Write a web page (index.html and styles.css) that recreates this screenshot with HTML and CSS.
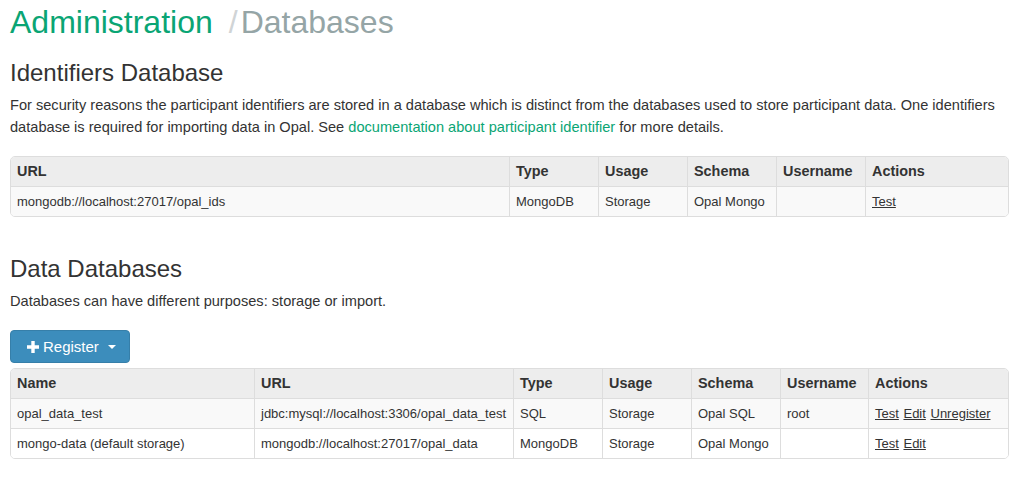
FILE: index.html
```html
<!DOCTYPE html>
<html>
<head>
<meta charset="utf-8">
<link rel="stylesheet" href="styles.css">
</head>
<body>
<div class="page">
  <h1 class="title"><span class="crumb">Administration</span><span class="sep">/</span><span class="current">Databases</span></h1>

  <h2 class="section-title">Identifiers Database</h2>
  <p class="help">For security reasons the participant identifiers are stored in a database which is distinct from the databases used to store participant data. One identifiers database is required for importing data in Opal. See <a class="doc-link" href="#">documentation about participant identifier</a> for more details.</p>

  <table class="grid grid-ids">
    <colgroup>
      <col class="c-url1"><col class="c-sm"><col class="c-sm"><col class="c-sm"><col class="c-sm"><col class="c-act1">
    </colgroup>
    <thead>
      <tr><th>URL</th><th>Type</th><th>Usage</th><th>Schema</th><th>Username</th><th>Actions</th></tr>
    </thead>
    <tbody>
      <tr><td>mongodb://localhost:27017/opal_ids</td><td>MongoDB</td><td>Storage</td><td>Opal Mongo</td><td></td><td><a class="act" href="#">Test</a></td></tr>
    </tbody>
  </table>

  <h2 class="section-title section-gap">Data Databases</h2>
  <p class="help">Databases can have different purposes: storage or import.</p>

  <div class="toolbar">
    <button class="btn-primary" type="button">
      <svg class="plus" width="12" height="12" viewBox="0 0 12 12"><path d="M4.3 0h3.4v4.3H12v3.4H7.7V12H4.3V7.7H0V4.3h4.3z" fill="#fff"/></svg>
      <span class="btn-label">Register</span>
      <span class="caret"></span>
    </button>
  </div>

  <table class="grid grid-data">
    <colgroup>
      <col class="c-name"><col class="c-url2"><col class="c-sm"><col class="c-sm"><col class="c-sm"><col class="c-user2"><col class="c-act2">
    </colgroup>
    <thead>
      <tr><th>Name</th><th>URL</th><th>Type</th><th>Usage</th><th>Schema</th><th>Username</th><th>Actions</th></tr>
    </thead>
    <tbody>
      <tr><td>opal_data_test</td><td>jdbc:mysql://localhost:3306/opal_data_test</td><td>SQL</td><td>Storage</td><td>Opal SQL</td><td>root</td><td><a class="act" href="#">Test</a> <a class="act" href="#">Edit</a> <a class="act" href="#">Unregister</a></td></tr>
      <tr><td>mongo-data (default storage)</td><td>mongodb://localhost:27017/opal_data</td><td>MongoDB</td><td>Storage</td><td>Opal Mongo</td><td></td><td><a class="act" href="#">Test</a> <a class="act" href="#">Edit</a></td></tr>
    </tbody>
  </table>
</div>
</body>
</html>
```

FILE: styles.css
```css
html, body {
  margin: 0;
  padding: 0;
  background: #fff;
}
body {
  font-family: "Liberation Sans", Arial, sans-serif;
  color: #333;
}
.page {
  padding: 0 19px 20px 10px;
}
.title {
  margin: 4px 0 0;
  font-size: 32px;
  line-height: 36px;
  font-weight: normal;
  white-space: nowrap;
}
.crumb {
  color: #0aa574;
}
.sep {
  color: #d0d4d6;
  margin-left: 16px;
  margin-right: 3px;
}
.current {
  color: #95a5a6;
}
.section-title {
  margin: 19px 0 7px;
  font-size: 24px;
  line-height: 28px;
  font-weight: normal;
  color: #333;
}
.section-gap {
  margin-top: 38px;
}
.help {
  margin: 0;
  font-size: 14.6px;
  line-height: 22px;
}
.doc-link {
  color: #0aa574;
  text-decoration: none;
}
.grid {
  width: 999px;
  table-layout: fixed;
  border-collapse: separate;
  border-spacing: 0;
  border: 1px solid #ddd;
  border-radius: 5px;
  overflow: hidden;
}
.grid-ids {
  margin-top: 18px;
}
.grid-data {
  margin-top: 5px;
}
.c-url1 { width: 498px; }
.c-sm { width: 89px; }
.c-act1 { width: 143px; }
.c-name { width: 243px; }
.c-url2 { width: 259px; }
.c-user2 { width: 88px; }
.c-act2 { width: 140px; }
.grid th,
.grid td {
  text-align: left;
  padding: 5px 6px;
  line-height: 19px;
  white-space: nowrap;
  overflow: hidden;
  border-left: 1px solid #ddd;
}
.grid th:first-child,
.grid td:first-child {
  border-left: none;
}
.grid th {
  background: #ededed;
  font-size: 14.4px;
  font-weight: bold;
  color: #333;
}
.grid td {
  font-size: 13px;
  border-top: 1px solid #ddd;
}
.grid tbody tr:nth-child(odd) td {
  background: #f9f9f9;
}
.grid tbody tr:nth-child(even) td {
  background: #fff;
}
.act {
  color: #333;
  text-decoration: underline;
  margin-right: 1px;
}
.toolbar {
  margin-top: 18px;
  display: flex;
}
.btn-primary {
  display: inline-flex;
  align-items: center;
  height: 33px;
  width: 120px;
  padding: 0 0 0 16px;
  background: #3c8dbc;
  border: 1px solid #367fa9;
  border-radius: 4px;
  color: #fff;
  font-family: "Liberation Sans", Arial, sans-serif;
  font-size: 15px;
  cursor: pointer;
}
.plus {
  display: block;
  margin-right: 4px;
}
.btn-label {
  line-height: 20px;
}
.caret {
  display: inline-block;
  margin-left: 9px;
  width: 0;
  height: 0;
  border-left: 4px solid transparent;
  border-right: 4px solid transparent;
  border-top: 4px solid #fff;
}
```
